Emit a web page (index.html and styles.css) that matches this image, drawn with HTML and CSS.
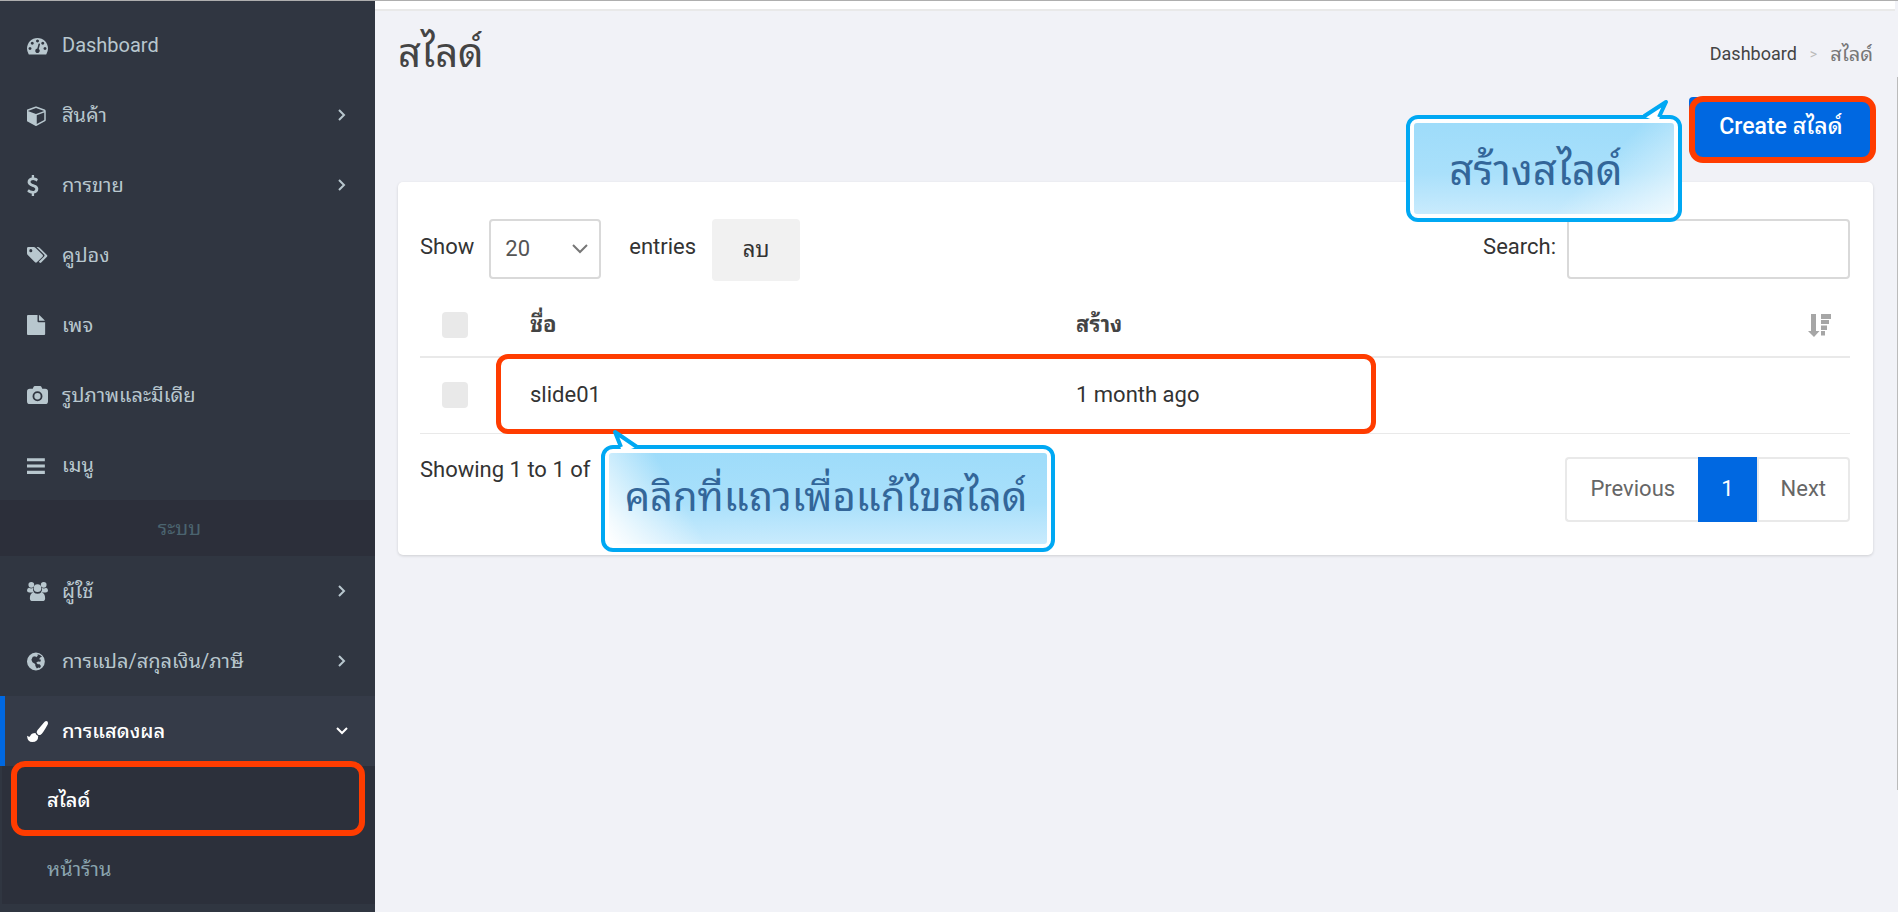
FILE: index.html
```
<!DOCTYPE html>
<html lang="th">
    <head>
        <meta charset="utf-8">
        <title>สไลด์</title>
        <link rel="stylesheet" href="styles.css">
    </head>
    <body>
        <aside class="sidebar">
            <ul class="menu">
                <li><a href="#">
                    <svg class="icon" viewBox="0 0 1792 1792"><path d="M384 1152q0-53-37.500-90.500t-90.500-37.500-90.500 37.500-37.500 90.500 37.500 90.500 90.500 37.500 90.500-37.500 37.500-90.500zm192-448q0-53-37.500-90.500t-90.500-37.500-90.500 37.500-37.500 90.500 37.500 90.500 90.500 37.500 90.500-37.500 37.500-90.500zm428 481l101-382q6-26-7.500-48.500t-38.500-29.500-48 6.500-30 39.500l-101 382q-60 5-107 43.500t-63 98.500q-20 77 20 146t117 89 146-20 89-117q16-60-6-117t-72-91zm660-33q0-53-37.500-90.500t-90.500-37.500-90.500 37.500-37.500 90.500 37.500 90.500 90.500 37.500 90.500-37.500 37.500-90.500zm-640-640q0-53-37.500-90.500t-90.500-37.500-90.500 37.500-37.500 90.500 37.500 90.500 90.500 37.500 90.500-37.500 37.500-90.500zm448 192q0-53-37.500-90.500t-90.500-37.500-90.500 37.500-37.500 90.500 37.500 90.500 90.500 37.500 90.500-37.500 37.500-90.500zm320 448q0 261-141 483-19 29-54 29h-1402q-35 0-54-29-141-221-141-483 0-182 71-348t191-286 286-191 348-71 348 71 286 191 191 286 71 348z"/></svg>
                    <span>Dashboard</span>
                </a></li>
                <li><a href="#">
                    <svg class="icon" viewBox="64 0 1792 1792"><path d="M896 1629l640-349v-636l-640 233v752zm-64-865l698-254-698-254-698 254zm832-252v768q0 35-18 65t-49 47l-704 384q-28 16-61 16t-61-16l-704-384q-31-17-49-47t-18-65v-768q0-40 23-73t61-47l704-256q22-8 44-8t44 8l704 256q38 14 61 47t23 73z"/></svg>
                    <span>สินค้า</span>
                    <svg class="arrow" viewBox="0 0 12 12"><path d="M3 1l5 5-5 5"/></svg>
                </a></li>
                <li><a href="#">
                    <svg class="icon" viewBox="400 0 1792 1792"><path d="M1362 1185q0 153-99.500 263.500t-258.500 136.500v175q0 14-9 23t-23 9h-135q-13 0-22.500-9.500t-9.500-22.500v-175q-66-9-127.500-31t-101.500-44.500-74-48-46.500-37.500-17.500-18q-17-21-2-41l103-135q7-10 23-12 15-2 24 9l2 2q113 99 243 125 37 8 74 8 81 0 142.500-43t61.500-122q0-28-15-53t-33.500-42-58.500-37.500-66-32-80-32.500q-39-16-61.500-25t-61.500-26.500-62.500-31-56.500-35.500-53.500-42.500-43.500-49-35.500-58-21-66.500-8.500-78q0-138 98-242t255-134v-180q0-13 9.500-22.500t22.500-9.500h135q14 0 23 9t9 23v176q57 6 110.500 23t87 33.500 63.500 37.500 39 29 15 14q17 18 5 38l-81 146q-8 15-23 16-14 3-27-7-3-3-14.500-12t-39-26.500-58.500-32-74.500-26-85.500-11.500q-95 0-155 43t-60 111q0 26 8.500 48t29.500 41.500 39.500 33 56 31 60.500 27 70 27.500q53 20 81 31.500t76 35 75.500 42.500 62 50 53 63.500 31.500 76.500 13 94z"/></svg>
                    <span>การขาย</span>
                    <svg class="arrow" viewBox="0 0 12 12"><path d="M3 1l5 5-5 5"/></svg>
                </a></li>
                <li><a href="#">
                    <svg class="icon" viewBox="0 0 22 22"><path fill-rule="evenodd" d="M1.500 2H7q1 0 1.800.8l7.500 7.500q.9.9 0 1.900l-6 6q-.9.900-1.900 0L.8 10.500Q0 9.700 0 8.600V3.500Q0 2 1.500 2zM4 4.300a1.600 1.600 0 1 0 0 3.200 1.600 1.600 0 0 0 0-3.200z"/><path d="M10 2h1.300q1 0 1.900.8l7.700 7.600q.9.900 0 1.900l-6 6q-.9.900-1.800.1l-.8-.8 5.600-5.600q1-1 0-2z"/></svg>
                    <span>คูปอง</span>
                </a></li>
                <li><a href="#">
                    <svg class="icon" viewBox="0 0 22 22"><path d="M1 0h10v6.500q0 1 1 1h7V20q0 1-1 1H1q-1 0-1-1V1q0-1 1-1z"/><path d="M12.500 0q.6.100 1.200.700l4.200 4.200q.6.600.7 1.200h-6.100z"/></svg>
                    <span>เพจ</span>
                </a></li>
                <li><a href="#">
                    <svg class="icon" viewBox="0 0 22 20"><path fill-rule="evenodd" d="M3 3h3l.8-2Q7.200 0 8.300 0h5.400q1.100 0 1.500 1l.8 2h3q3 0 3 3v10q0 3-3 3H3q-3 0-3-3V6q0-3 3-3zm8 2.600a5.200 5.200 0 1 0 0 10.400 5.200 5.200 0 0 0 0-10.400zm0 1.900a3.300 3.300 0 1 1 0 6.600 3.300 3.300 0 0 1 0-6.600z"/></svg>
                    <span>รูปภาพและมีเดีย</span>
                </a></li>
                <li><a href="#">
                    <svg class="icon" viewBox="0 0 20 20"><path d="M0 3h17v3H0zM0 9h17v3H0zM0 15h17v3H0z"/></svg>
                    <span>เมนู</span>
                </a></li>
                <li class="menu-header">ระบบ</li>
                <li><a href="#">
                    <svg class="icon" viewBox="0 0 22 20"><circle cx="4.500" cy="3" r="3"/><circle cx="17.500" cy="3" r="3"/><circle cx="11" cy="6.500" r="4"/><path d="M2 6q2 1.500 4.200.4-.3 3 1.600 4.600H2.500Q0 11 0 9q0-2.500 2-3zM20 6q-2 1.500-4.200.4.300 3-1.600 4.600h5.300q2.500 0 2.500-2 0-2.500-2-3zM7 11q4 2.600 8 0 4 .5 4 6 0 3-3 3H6q-3 0-3-3 0-5.500 4-6z"/></svg>
                    <span>ผู้ใช้</span>
                    <svg class="arrow" viewBox="0 0 12 12"><path d="M3 1l5 5-5 5"/></svg>
                </a></li>
                <li><a href="#">
                    <svg class="icon" viewBox="0 0 20 20"><path fill-rule="evenodd" d="M8.500 1.500a8.500 8.500 0 1 0 0 17 8.500 8.500 0 0 0 0-17zM10 3q2.700.4 4.300 2.400l-1.800.9-.9 1.500 1.700.5-.6 2-2.200-.3-1.700 1.300 1.500 1.300 1.700-.1 1.300 1.700-1 2-1.300-.6-1.600 1-1.400-2.300-.2-2-2.600-1.500-1-2.500L5.500 5.500l2.300-.5L8.700 6l1.600-1.500z"/></svg>
                    <span>การแปล/สกุลเงิน/ภาษี</span>
                    <svg class="arrow" viewBox="0 0 12 12"><path d="M3 1l5 5-5 5"/></svg>
                </a></li>
                <li class="active"><a href="#">
                    <svg class="icon" viewBox="0 0 20 20"><path d="M18.300 0q1.700 0 1.700 1.800 0 1-.7 2.300-4.300 7.900-6.300 9-1.500.8-2.900-.6-1.500-1.500-.6-2.900Q10.400 8.200 16.800.8q.7-.8 1.500-.8zM8 11.500q.6 2 2.700 2.700 0 5.800-5.700 5.800-4.500 0-5-6 1.500 1 2.200 1 .6 0 .8-.6Q4 11.500 8 11.500z"/></svg>
                    <span>การแสดงผล</span>
                    <svg class="arrow" viewBox="0 0 12 12"><path d="M1 3l5 5 5-5"/></svg>
                </a></li>
            </ul>
            <ul class="submenu">
                <li class="current"><a href="#">สไลด์</a></li>
                <li><a href="#">หน้าร้าน</a></li>
            </ul>
        </aside>

        <main class="content">
            <div class="topbar"></div>
            <header class="page-header">
                <h1>สไลด์</h1>
                <nav class="breadcrumb">
                    <a href="#">Dashboard</a>
                    <span class="sep">&gt;</span>
                    <span class="here">สไลด์</span>
                </nav>
            </header>
            <div class="actions">
                <div class="create-wrap">
                    <button type="button" class="btn-create">Create สไลด์</button>
                    <div class="callout callout-create">
                        <svg class="tail" viewBox="0 0 30 24"><path class="tail-fill" d="M2 17L23 2l-8 20z"/><path class="tail-line" d="M0 17L23 2l-7 15"/></svg>
                        <div class="callout-body">สร้างสไลด์</div>
                    </div>
                </div>
            </div>

            <section class="card">
                <div class="toolbar">
                    <label for="length">Show</label>
                    <div class="select-wrap">
                        <select id="length"><option>20</option></select>
                        <svg class="caret" viewBox="0 0 16 10"><path d="M1 1l7 7 7-7"/></svg>
                    </div>
                    <span class="entries">entries</span>
                    <button type="button" class="btn-delete">ลบ</button>
                    <label class="search-label" for="search">Search:</label>
                    <input id="search" class="search" type="text">
                </div>
                <div class="table-wrap">
                    <table>
                        <thead>
                            <tr>
                                <th class="col-check"><input type="checkbox" aria-label="เลือกทั้งหมด"></th>
                                <th class="col-name">ชื่อ</th>
                                <th class="col-date">สร้าง</th>
                                <th class="col-sort"><svg class="sort" viewBox="0 0 23 24"><path d="M3 0h5v17h3.500L6 23 0 17h3zM13 0h10v5H13zM13 6h8v4h-8zM13 11.500h6v4.500h-6zM13 17h4v4.500h-4z"/></svg></th>
                            </tr>
                        </thead>
                        <tbody>
                            <tr>
                                <td class="col-check"><input type="checkbox" aria-label="slide01"></td>
                                <td>slide01</td>
                                <td>1 month ago</td>
                                <td></td>
                            </tr>
                        </tbody>
                    </table>
                    <div class="row-mark">
                        <div class="callout callout-edit">
                            <svg class="tail" viewBox="0 0 30 24"><path class="tail-fill" d="M6 2l7 20L28 17z"/><path class="tail-line" d="M12 17L6 2l22 15"/></svg>
                            <div class="callout-body">คลิกที่แถวเพื่อแก้ไขสไลด์</div>
                        </div>
                    </div>
                </div>
                <div class="table-footer">
                    <span>Showing 1 to 1 of</span>
                    <nav class="pagination">
                        <a href="#">Previous</a>
                        <a href="#" class="on">1</a>
                        <a href="#">Next</a>
                    </nav>
                </div>
            </section>
        </main>
        <div class="scroll"><div class="thumb"></div></div>
    </body>
</html>
```
FILE: styles.css
```
*{
    margin: 0;
    padding: 0;
    box-sizing: border-box;
}
body{
    display: flex;
    min-height: 100vh;
    border-top: 1px solid #aeaeae;
    background: #f1f2f7;
    color: #333;
    font-family: Roboto, "Noto Sans Thai Looped", Loma, Waree, "Noto Sans Thai", "Noto Sans", sans-serif;
    font-size: 22px;
    line-height: 30px;
}
a{
    color: inherit;
    text-decoration: none;
}
ul{
    list-style: none;
}
button, input, select{
    font: inherit;
    color: inherit;
}

/* sidebar */
.sidebar{
    flex: 0 0 375px;
    padding: 9px 0 6px;
    background: #303641;
    color: #b8c7ce;
    font-size: 20px;
}
.menu a{
    display: flex;
    align-items: center;
    height: 70px;
    padding: 0 27px;
}
.icon{
    width: 21px;
    height: 21px;
    margin-right: 14px;
    fill: currentColor;
}
.arrow{
    width: 12px;
    height: 12px;
    margin-left: auto;
    fill: none;
    stroke: currentColor;
    stroke-width: 2;
}
.menu-header{
    height: 56px;
    padding-right: 16px;
    background: #2c2f3a;
    color: #4b646f;
    line-height: 56px;
    text-align: center;
}
.menu .active{
    border-left: 5px solid #0068e1;
    background: #353b48;
    color: #fff;
    font-weight: 500;
}
.menu .active a{
    padding-left: 22px;
}
.submenu{
    margin-left: 2px;
    background: #2c303b;
    color: #8aa4af;
}
.submenu a{
    display: block;
    padding-left: 45px;
    line-height: 69px;
}
.current{
    position: relative;
    color: #fff;
    font-weight: 500;
}
.current::after{
    content: "";
    position: absolute;
    inset: -5px 10px -1px 9px;
    border: 6px solid #ff3c00;
    border-radius: 14px;
    pointer-events: none;
}

/* page */
.content{
    flex: 1;
    min-width: 0;
}
.topbar{
    height: 10px;
    background: #fff;
    border-bottom: 2px solid #e9e9e9;
}
.page-header{
    display: flex;
    justify-content: space-between;
    align-items: center;
    height: 86px;
    padding: 0 22px 0 23px;
}
.page-header h1{
    color: #444;
    font-size: 40px;
    font-weight: 400;
    line-height: 40px;
}
.breadcrumb{
    display: flex;
    gap: 13px;
    font-size: 18px;
    color: #777;
}
.breadcrumb a{
    color: #444;
}
.breadcrumb .sep{
    font-size: 14px;
    color: #bbb;
}
.breadcrumb .here{
    font-size: 20px;
}
.actions{
    display: flex;
    justify-content: flex-end;
    height: 85px;
    padding-right: 22px;
}
.create-wrap{
    position: relative;
    height: 66px;
}
.btn-create{
    min-width: 184px;
    height: 64px;
    padding: 0 26px 4px;
    border: 0;
    border-radius: 4px 14px 14px 14px;
    background: #0068e1;
    color: #fff;
    font-size: 23px;
    font-weight: 500;
}
.create-wrap::after{
    content: "";
    position: absolute;
    inset: -1px -3px 0 0;
    border: 6px solid #ff3c00;
    border-radius: 14px;
    pointer-events: none;
}
.card{
    margin: 0 22px 0 23px;
    padding: 37px 23px 33px 22px;
    border-radius: 5px;
    background: #fff;
    box-shadow: 0 1px 3px rgba(0, 0, 0, .15);
}
.toolbar{
    display: flex;
    align-items: flex-start;
}
.toolbar label, .entries{
    line-height: 56px;
}
.select-wrap{
    position: relative;
    margin-left: 15px;
}
.select-wrap select{
    appearance: none;
    width: 112px;
    height: 60px;
    padding: 0 14px;
    border: 2px solid #d9d9d9;
    border-radius: 4px;
    background: #fff;
    color: #555;
}
.caret{
    position: absolute;
    right: 13px;
    top: 25px;
    width: 16px;
    height: 10px;
    fill: none;
    stroke: #777;
    stroke-width: 2;
}
.entries{
    margin-left: 28px;
}
.btn-delete{
    width: 88px;
    height: 62px;
    margin-left: 16px;
    border: 0;
    border-radius: 4px;
    background: #f1f1f1;
}
.search-label{
    margin-left: auto;
}
.search{
    width: 283px;
    height: 60px;
    margin-left: 11px;
    padding: 0 14px;
    border: 2px solid #d9d9d9;
    border-radius: 4px;
}

/* table */
.table-wrap{
    position: relative;
    margin-top: 12px;
}
table{
    width: 100%;
    border-collapse: collapse;
    table-layout: fixed;
    text-align: left;
}
th, td{
    padding: 0 22px;
}
th{
    height: 64px;
    border-bottom: 2px solid #e9e9e9;
    color: #444;
    font-size: 22px;
    font-weight: 700;
}
td{
    height: 76px;
    border-bottom: 1px solid #e9e9e9;
}
.col-check{
    width: 88px;
}
.col-name{
    width: 546px;
}
.col-sort{
    text-align: right;
    padding-right: 19px;
}
.col-check input{
    display: block;
    appearance: none;
    width: 26px;
    height: 26px;
    border-radius: 4px;
    background: #e9e9e9;
}
.sort{
    display: inline-block;
    width: 23px;
    height: 24px;
    vertical-align: middle;
    fill: #a6a6a6;
}
.row-mark{
    position: absolute;
    inset: 61px 474px 0 76px;
    border: 5px solid #ff3c00;
    border-radius: 12px;
}
.table-footer{
    display: flex;
    justify-content: space-between;
    padding-top: 23px;
}
.table-footer > span{
    line-height: 26px;
}
.pagination{
    display: flex;
    color: #666;
}
.pagination a{
    height: 65px;
    padding: 0 21px;
    border: 2px solid #e9e9e9;
    line-height: 60px;
}
.pagination a:first-child{
    padding: 0 23px;
    border-right: 0;
    border-radius: 4px 0 0 4px;
}
.pagination a:last-child{
    padding: 0 22px;
    border-radius: 0 4px 4px 0;
}
.pagination .on{
    border-color: #0068e1;
    background: #0068e1;
    color: #fff;
}

/* callouts */
.callout{
    position: absolute;
    z-index: 2;
    height: 107px;
    padding: 4px;
    border: 4px solid #00a8f3;
    border-radius: 12px;
    background: #fff;
    color: #369;
    white-space: nowrap;
}
.callout-body{
    height: 100%;
    border-radius: 3px;
    text-align: center;
    line-height: 90px;
}
.callout-create{
    top: 18px;
    right: 191px;
    width: 276px;
}
.callout-create .callout-body{
    padding-right: 16px;
    font-size: 42px;
    line-height: 96px;
    background: linear-gradient(135deg, transparent 65%, rgba(255, 255, 255, .7)), linear-gradient(#9edcfa, #a9e0fb 55%, #c9ebfd);
}
.callout-edit{
    top: 86px;
    left: 100px;
    width: 454px;
}
.callout-edit .callout-body{
    padding-right: 4px;
    font-size: 40px;
    background: linear-gradient(60deg, #fff, transparent 20%), linear-gradient(#9edcfa, #a9e0fb 55%, #c9ebfd);
}
.tail{
    position: absolute;
    top: -19px;
    width: 30px;
    height: 24px;
}
.callout-create .tail{
    right: 5px;
}
.callout-edit .tail{
    left: 4px;
}
.tail-fill{
    fill: #fff;
}
.tail-line{
    fill: none;
    stroke: #00a8f3;
    stroke-width: 4;
    stroke-linejoin: round;
}

/* scrollbar */
.scroll{
    width: 3px;
    padding-top: 76px;
}
.thumb{
    width: 1px;
    height: 713px;
    margin-left: auto;
    background: #bbb;
}
```
